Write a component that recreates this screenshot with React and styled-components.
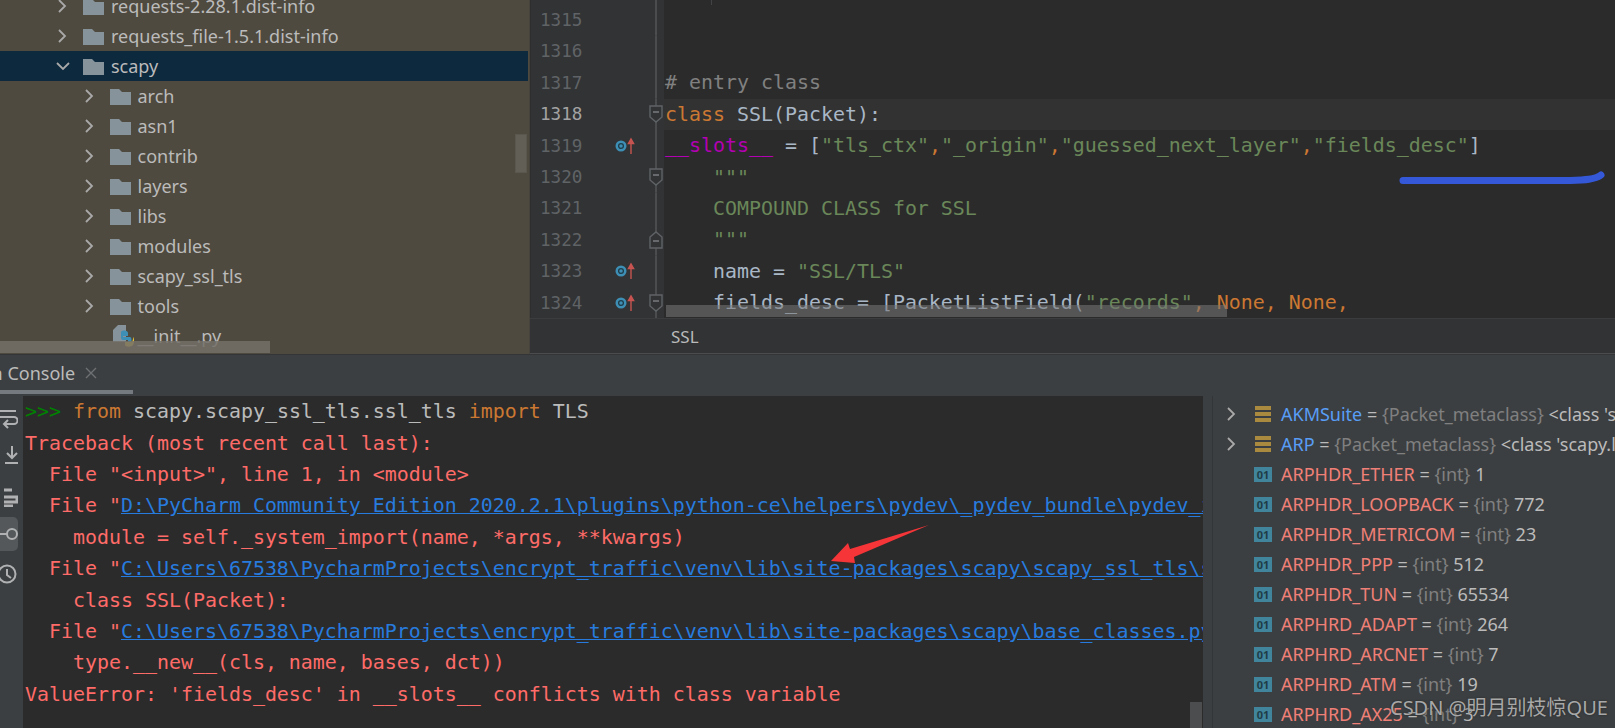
import * as React from "react"
import styled, { createGlobalStyle } from "styled-components"

const GlobalStyle = createGlobalStyle`
  html, body { margin: 0; padding: 0; background: #3c3f41; }
  * { box-sizing: border-box; }
`

const MONO = `"DejaVu Sans Mono", "Liberation Mono", monospace`
const UI = `"Noto Sans", "Open Sans", sans-serif`

const Screen = styled.div`
  position: relative;
  width: 1615px;
  height: 728px;
  overflow: hidden;
  display: flex;
  flex-direction: column;
  background: #3c3f41;
`

const TopArea = styled.div`
  display: flex;
  height: 354px;
  flex: none;
`

const TreePanel = styled.div`
  position: relative;
  width: 530px;
  flex: none;
  overflow: hidden;
  background: #4f4a3f;
  border-right: 1px solid #45433c;
  padding-top: 0;
  font: 18px ${UI};
  color: #bbbbbb;
`

const TreeRows = styled.div`
  margin-top: -9px;
`

const TreeRow = styled.div`
  display: flex;
  align-items: center;
  height: 30px;
  padding-left: ${({ $depth }) => 58 + $depth * 26.5}px;
  background: ${({ $selected }) => ($selected ? "#0d293e" : "transparent")};
  margin-right: 1px;
  white-space: nowrap;
`

const Chevron = styled.svg`
  width: 9px;
  height: 14px;
  flex: none;
  margin-right: 16px;
  fill: none;
  stroke: #a9a9a9;
  stroke-width: 1.8;
`

const DownChevron = styled.svg`
  width: 14px;
  height: 9px;
  flex: none;
  margin-left: -2px;
  margin-right: 13px;
  fill: none;
  stroke: #a9a9a9;
  stroke-width: 1.8;
`

const FolderIcon = styled.svg`
  width: 21px;
  height: 17px;
  flex: none;
  margin-right: 7px;
  fill: #87939a;
`

const PyIcon = styled.svg`
  width: 22px;
  height: 24px;
  flex: none;
  margin-left: 27px;
  margin-right: 4px;
`

const ThumbV = styled.div`
  position: absolute;
  left: 515px;
  top: 134px;
  width: 12px;
  height: 39px;
  background: #625f57;
  border: 1px solid #5a574e;
`

const ThumbH = styled.div`
  position: absolute;
  left: 0;
  top: 341px;
  width: 270px;
  height: 12px;
  background: rgba(115, 112, 105, 0.85);
`

const EditorPanel = styled.div`
  position: relative;
  flex: 1;
  min-width: 0;
  display: flex;
  flex-direction: column;
  background: #2b2b2b;
`

const CodeArea = styled.div`
  height: 318px;
  flex: none;
  overflow: hidden;
`

const CodeRows = styled.div`
  margin-top: -27px;
`

const CodeRow = styled.div`
  display: flex;
  height: 31.4px;
`

const Gutter = styled.div`
  display: flex;
  align-items: center;
  width: 134px;
  flex: none;
  background: #313335;
  border-left: 1px solid #2e2e2e;
`

const LineNumber = styled.span`
  width: 84px;
  flex: none;
  padding-left: 9px;
  font: 17.6px ${MONO};
  color: ${({ $active }) => ($active ? "#a4a3a3" : "#606366")};
`

const MarkerSlot = styled.div`
  width: 34px;
  flex: none;
  display: flex;
  align-items: center;
  height: 100%;
`

const FoldSlot = styled.div`
  width: 14px;
  height: 100%;
  flex: none;
  display: flex;
  align-items: center;
  justify-content: center;
  background: linear-gradient(#4a4c4e, #4a4c4e) center / 2px 100% no-repeat;
`

const CodeText = styled.div`
  flex: 1;
  padding-left: 1px;
  display: flex;
  align-items: center;
  white-space: pre;
  font: 19.93px ${MONO};
  color: #a9b7c6;
  background: ${({ $active }) => ($active ? "#323232" : "transparent")};
`

const Kw = styled.span`color: #cc7832;`
const Str = styled.span`color: #6a8759;`
const Cmt = styled.span`color: #808080;`
const Magic = styled.span`color: #b200b2;`

const EditorThumb = styled.div`
  position: absolute;
  left: 136px;
  top: 305px;
  width: 561px;
  height: 12px;
  background: rgba(120, 120, 120, 0.55);
`

const IndentTick = styled.div`
  position: absolute;
  left: 181px;
  top: 0;
  width: 1px;
  height: 5px;
  background: #414345;
`

const Breadcrumb = styled.div`
  height: 36px;
  flex: none;
  display: flex;
  align-items: center;
  padding-left: 141px;
  background: #313335;
  border-top: 1px solid #3a3c3e;
  border-bottom: 1px solid #4a4c4e;
  font: 17px ${UI};
  color: #bbbbbb;
`

const TabBar = styled.div`
  height: 42px;
  flex: none;
  display: flex;
  align-items: flex-start;
  overflow: hidden;
  background: #3c3f41;
  border-top: 1px solid #333537;
`

const Tab = styled.div`
  width: 133px;
  height: 39px;
  flex: none;
  display: flex;
  align-items: center;
  overflow: hidden;
  border-bottom: 4px solid #747a80;
  font: 18px ${UI};
  color: #bbbbbb;
  white-space: nowrap;
`

const TabLabel = styled.span`
  margin-left: -57px;
`

const CloseMark = styled.svg`
  width: 12px;
  height: 12px;
  margin-left: 10px;
  flex: none;
  stroke: #6e7072;
  stroke-width: 1.4;
`

const BottomArea = styled.div`
  flex: 1;
  min-height: 0;
  display: flex;
`

const SideBar = styled.div`
  width: 23px;
  flex: none;
  display: flex;
  flex-direction: column;
  align-items: flex-start;
  padding-top: 12px;
  overflow: hidden;
  background: #3c3f41;
`

const SideIcon = styled.div`
  width: 18px;
  height: ${({ $h }) => $h}px;
  margin-bottom: ${({ $gap }) => $gap}px;
  display: flex;
  align-items: center;
  justify-content: flex-end;
  border-radius: 0 5px 5px 0;
  background: ${({ $on }) => ($on ? "#55585a" : "transparent")};
  svg {
    flex: none;
    fill: none;
    stroke: #afb1b3;
    stroke-width: 2;
  }
`

const ConsolePanel = styled.div`
  position: relative;
  width: 1180px;
  flex: none;
  overflow: hidden;
  padding-left: 2px;
  background: #2b2b2b;
  font: 19.93px ${MONO};
  white-space: pre;
`

const ConsoleLine = styled.div`
  display: flex;
  align-items: center;
  height: 31.4px;
  color: ${({ $plain }) => ($plain ? "#bbbbbb" : "#ff6b68")};
`

const Prompt = styled.span`color: #008000;`

const FileLink = styled.span`
  color: #287bde;
  text-decoration: underline;
`

const ConsoleThumb = styled.div`
  position: absolute;
  right: 1px;
  bottom: 0;
  width: 12px;
  height: 26px;
  background: #4c4d4e;
`

const Splitter = styled.div`
  width: 10px;
  flex: none;
  background: #3c3f41;
  border-right: 1px solid #333537;
`

const VarPanel = styled.div`
  flex: 1;
  min-width: 0;
  overflow: hidden;
  padding-top: 3px;
  background: #3c3f41;
  font: 18px ${UI};
  color: #bbbbbb;
  white-space: nowrap;
`

const VarRow = styled.div`
  display: flex;
  align-items: center;
  height: 30px;
  padding-left: 14px;
`

const ChevronSlot = styled.div`
  width: 27px;
  flex: none;
  display: flex;
  align-items: center;
`

const VarChevron = styled(Chevron)`
  margin-right: 0;
`

const StackIcon = styled.svg`
  width: 18px;
  height: 17px;
  flex: none;
  margin-right: 9px;
  fill: #a98a3f;
`

const IntBadge = styled.span`
  width: 18px;
  height: 15px;
  flex: none;
  margin-right: 9px;
  display: flex;
  align-items: center;
  justify-content: center;
  background: #40859c;
  color: #1f3d48;
  font: bold 11px ${UI};
`

const VarName = styled.span`
  color: ${({ $cls }) => ($cls ? "#589df6" : "#f08077")};
`

const VarType = styled.span`
  color: #808080;
`

const Watermark = styled.div`
  position: absolute;
  left: 1390px;
  top: 692px;
  font: 20px "Noto Sans", "Noto Sans CJK SC", sans-serif;
  color: #a8a8a8;
  text-shadow: 0 0 2px rgba(30, 30, 30, 0.8);
  white-space: nowrap;
`

const Annotation = styled.svg`
  position: absolute;
  left: 0;
  top: 0;
  width: 1615px;
  height: 728px;
  pointer-events: none;
`

const Folder = () => (
  <FolderIcon viewBox="0 0 21 17">
    <path d="M0 1h9l3 3h9v13H0z" />
  </FolderIcon>
)

const Right = () => (
  <Chevron viewBox="0 0 9 14">
    <path d="M1 1l6 6-6 6" />
  </Chevron>
)

const treeItems = [
  { name: "requests-2.28.1.dist-info", depth: 0 },
  { name: "requests_file-1.5.1.dist-info", depth: 0 },
  { name: "scapy", depth: 0, open: true },
  { name: "arch", depth: 1 },
  { name: "asn1", depth: 1 },
  { name: "contrib", depth: 1 },
  { name: "layers", depth: 1 },
  { name: "libs", depth: 1 },
  { name: "modules", depth: 1 },
  { name: "scapy_ssl_tls", depth: 1 },
  { name: "tools", depth: 1 },
]

const Marker = () => (
  <svg width="20" height="18" viewBox="0 0 20 18">
    <circle cx="6" cy="9" r="5.5" fill="#3d8fb5" />
    <circle cx="6" cy="9" r="2.4" fill="none" stroke="#1f3d4a" strokeWidth="1.3" />
    <path d="M16 17V3M13.4 6.5L16 2l2.6 4.5z" stroke="#c75450" strokeWidth="1.4" fill="#c75450" />
  </svg>
)

const Fold = ({ up }) => (
  <svg width="14" height="18" viewBox="0 0 14 18">
    <path
      d={up ? "M1 6l6-5 6 5v11H1z" : "M1 1h12v11l-6 5-6-5z"}
      fill="#313335"
      stroke="#606366"
      strokeWidth="1.4"
    />
    <path d={up ? "M4 10h6" : "M4 7h6"} stroke="#808285" strokeWidth="1.4" />
  </svg>
)

const codeLines = [
  { n: 1314 },
  { n: 1315 },
  { n: 1316 },
  { n: 1317, code: <Cmt># entry class</Cmt> },
  { n: 1318, active: true, fold: "down", code: <><Kw>class</Kw> SSL(Packet):</> },
  {
    n: 1319,
    marker: true,
    code: (
      <>
        {"    "}<Magic>__slots__</Magic> = [<Str>"tls_ctx"</Str><Kw>,</Kw> <Str>"_origin"</Str><Kw>,</Kw>{" "}
        <Str>"guessed_next_layer"</Str><Kw>,</Kw> <Str>"fields_desc"</Str>]
      </>
    ),
  },
  { n: 1320, fold: "down", code: <Str>{'    """'}</Str> },
  { n: 1321, code: <Str>{"    COMPOUND CLASS for SSL"}</Str> },
  { n: 1322, fold: "up", code: <Str>{'    """'}</Str> },
  { n: 1323, marker: true, code: <>{"    name = "}<Str>"SSL/TLS"</Str></> },
  {
    n: 1324,
    marker: true,
    fold: "down",
    code: (
      <>
        {"    fields_desc = [PacketListField("}<Str>"records"</Str><Kw>, None, None,</Kw>
      </>
    ),
  },
]

const variables = [
  { name: "ARPHDR_ETHER", value: "1" },
  { name: "ARPHDR_LOOPBACK", value: "772" },
  { name: "ARPHDR_METRICOM", value: "23" },
  { name: "ARPHDR_PPP", value: "512" },
  { name: "ARPHDR_TUN", value: "65534" },
  { name: "ARPHRD_ADAPT", value: "264" },
  { name: "ARPHRD_ARCNET", value: "7" },
  { name: "ARPHRD_ATM", value: "19" },
  { name: "ARPHRD_AX25", value: "3" },
]

const Stack = () => (
  <StackIcon viewBox="0 0 18 17">
    <path d="M1 0h16v4H1zM1 6h16v4H1zM1 12h16v4H1z" />
  </StackIcon>
)

export default function App() {
  return (
    <Screen>
      <GlobalStyle />
      <TopArea>
        <TreePanel>
          <TreeRows>
            {treeItems.map((item) => (
              <TreeRow key={item.name} $depth={item.depth} $selected={item.open}>
                {item.open ? (
                  <DownChevron viewBox="0 0 14 9">
                    <path d="M1 1l6 6 6-6" />
                  </DownChevron>
                ) : (
                  <Right />
                )}
                <Folder />
                {item.name}
              </TreeRow>
            ))}
            <TreeRow $depth={1}>
              <PyIcon viewBox="0 0 22 24">
                <path d="M1 6l5-5h8v17H1z" fill="#87939a" />
                <path d="M10 7c3-1 6 0 6 2v3h-5v1h7c2 0 2 6 0 6h-2v-3h-5c-2 0-2-2-2-3V9c0-1 0-2 1-2z" fill="#3d8fb5" />
                <path d="M20 22c-3 1-6 1-7-1v-3h5c2 0 3-1 3-3v-2c2 2 1 8-1 9z" fill="#e5c235" />
              </PyIcon>
              __init__.py
            </TreeRow>
          </TreeRows>
          <ThumbV />
          <ThumbH />
        </TreePanel>

        <EditorPanel>
          <CodeArea>
            <CodeRows>
              {codeLines.map((line) => (
                <CodeRow key={line.n}>
                  <Gutter>
                    <LineNumber $active={line.active}>{line.n}</LineNumber>
                    <MarkerSlot>{line.marker && <Marker />}</MarkerSlot>
                    <FoldSlot>{line.fold && <Fold up={line.fold === "up"} />}</FoldSlot>
                  </Gutter>
                  <CodeText $active={line.active}>{line.code}</CodeText>
                </CodeRow>
              ))}
            </CodeRows>
          </CodeArea>
          <IndentTick />
          <EditorThumb />
          <Breadcrumb>SSL</Breadcrumb>
        </EditorPanel>
      </TopArea>

      <TabBar>
        <Tab>
          <TabLabel>Python Console</TabLabel>
          <CloseMark viewBox="0 0 12 12">
            <path d="M1 1l10 10M11 1L1 11" />
          </CloseMark>
        </Tab>
      </TabBar>

      <BottomArea>
        <SideBar>
          <SideIcon $h={22} $gap={15}>
            <svg width="18" height="20" viewBox="0 0 18 20">
              <path d="M0 2h16M0 8h14a3 3 0 0 1 0 7H5M8 11l-4 4 4 4" />
            </svg>
          </SideIcon>
          <SideIcon $h={20} $gap={21}>
            <svg width="13" height="20" viewBox="0 0 13 20">
              <path d="M7 1v11M2 8l5 5 5-5M0 18h13" />
            </svg>
          </SideIcon>
          <SideIcon $h={21} $gap={10}>
            <svg width="14" height="20" viewBox="0 0 14 20">
              <path d="M0 3h8M0 10h13v5H0M0 19h9" strokeWidth="3" />
            </svg>
          </SideIcon>
          <SideIcon $h={34} $gap={12} $on>
            <svg width="20" height="14" viewBox="0 0 20 14">
              <circle cx="14" cy="7" r="5" />
              <path d="M0 7h9" />
            </svg>
          </SideIcon>
          <SideIcon $h={22} $gap={0}>
            <svg width="20" height="20" viewBox="0 0 20 20">
              <circle cx="9" cy="10" r="8.5" />
              <path d="M9 5v6l4 3" />
            </svg>
          </SideIcon>
        </SideBar>

        <ConsolePanel>
          <ConsoleLine $plain>
            <Prompt>{">>> "}</Prompt>
            <Kw>from</Kw> scapy.scapy_ssl_tls.ssl_tls <Kw>import</Kw> TLS
          </ConsoleLine>
          <ConsoleLine>Traceback (most recent call last):</ConsoleLine>
          <ConsoleLine>{'  File "<input>", line 1, in <module>'}</ConsoleLine>
          <ConsoleLine>
            {'  File "'}
            <FileLink>D:\PyCharm Community Edition 2020.2.1\plugins\python-ce\helpers\pydev\_pydev_bundle\pydev_import_hook.py</FileLink>
          </ConsoleLine>
          <ConsoleLine>{"    module = self._system_import(name, *args, **kwargs)"}</ConsoleLine>
          <ConsoleLine>
            {'  File "'}
            <FileLink>C:\Users\67538\PycharmProjects\encrypt_traffic\venv\lib\site-packages\scapy\scapy_ssl_tls\ssl_tls.py</FileLink>
          </ConsoleLine>
          <ConsoleLine>{"    class SSL(Packet):"}</ConsoleLine>
          <ConsoleLine>
            {'  File "'}
            <FileLink>C:\Users\67538\PycharmProjects\encrypt_traffic\venv\lib\site-packages\scapy\base_classes.py</FileLink>
          </ConsoleLine>
          <ConsoleLine>{"    type.__new__(cls, name, bases, dct))"}</ConsoleLine>
          <ConsoleLine>ValueError: 'fields_desc' in __slots__ conflicts with class variable</ConsoleLine>
          <ConsoleThumb />
        </ConsolePanel>

        <Splitter />

        <VarPanel>
          <VarRow>
            <ChevronSlot>
              <VarChevron viewBox="0 0 9 14"><path d="M1 1l6 6-6 6" /></VarChevron>
            </ChevronSlot>
            <Stack />
            <VarName $cls>AKMSuite</VarName>&nbsp;= <VarType>&nbsp;{"{Packet_metaclass}"}</VarType>&nbsp;&lt;class 'scapy.packet
          </VarRow>
          <VarRow>
            <ChevronSlot>
              <VarChevron viewBox="0 0 9 14"><path d="M1 1l6 6-6 6" /></VarChevron>
            </ChevronSlot>
            <Stack />
            <VarName $cls>ARP</VarName>&nbsp;= <VarType>&nbsp;{"{Packet_metaclass}"}</VarType>&nbsp;&lt;class 'scapy.layers.l2.ARP'&gt;
          </VarRow>
          {variables.map((v) => (
            <VarRow key={v.name}>
              <ChevronSlot />
              <IntBadge>01</IntBadge>
              <VarName>{v.name}</VarName>&nbsp;= <VarType>&nbsp;{"{int}"}</VarType>&nbsp;{v.value}
            </VarRow>
          ))}
        </VarPanel>
      </BottomArea>

      <Watermark>CSDN @明月别枝惊QUE</Watermark>

      <Annotation viewBox="0 0 1615 728">
        <path d="M1403 180.5L1570 180.5C1585 180 1595 179.5 1601 175" fill="none" stroke="#3558d8" strokeWidth="7" strokeLinecap="round" />
        <path d="M929 525L854 557L855 563L831 561L848 543L850 549z" fill="#f53538" />
      </Annotation>
    </Screen>
  )
}
